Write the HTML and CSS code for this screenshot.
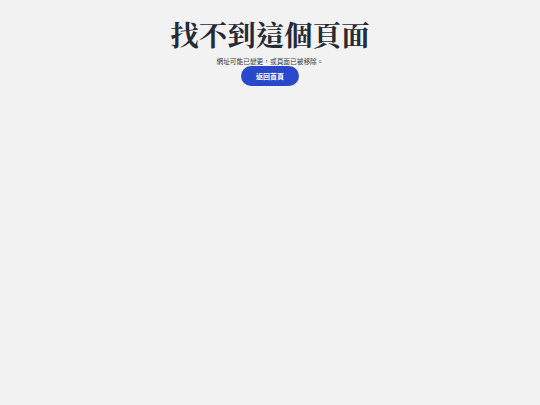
FILE: index.html
```html
<!DOCTYPE html>
<html lang="zh-Hant">
<head>
  <meta charset="UTF-8" />
  <meta name="viewport" content="width=device-width, initial-scale=1.0" />
  <title>找不到這個頁面</title>
  <link rel="stylesheet" href="styles.css">
</head>
<body>
  <main class="notfound">
    <h1 class="notfound-title">找不到這個頁面</h1>
    <p class="notfound-text">網址可能已變更，或頁面已被移除。</p>
    <a class="notfound-btn" href="/">返回首頁</a>
  </main>
</body>
</html>
```

FILE: styles.css
```css
body {
  margin: 0;
  background: #f2f2f2;
  font-family: "Noto Sans CJK TC", "Noto Sans", sans-serif;
}
.notfound {
  display: flex;
  flex-direction: column;
  align-items: center;
  padding-top: 16px;
}
.notfound-title {
  margin: 0;
  font-family: "Noto Serif CJK TC", "Noto Serif CJK JP", "Noto Sans CJK TC", serif;
  font-size: 28.5px;
  font-weight: 700;
  line-height: 36px;
  color: #262a36;
}
.notfound-text {
  margin: 4px 0 0;
  font-size: 6.7px;
  line-height: 10px;
  color: #3a3d47;
}
.notfound-btn {
  display: block;
  margin-top: 0;
  width: 58px;
  height: 20px;
  line-height: 20px;
  text-align: center;
  border-radius: 10px;
  background: #2a48cc;
  color: #fff;
  font-size: 7px;
  font-weight: 700;
  text-decoration: none;
}
```
